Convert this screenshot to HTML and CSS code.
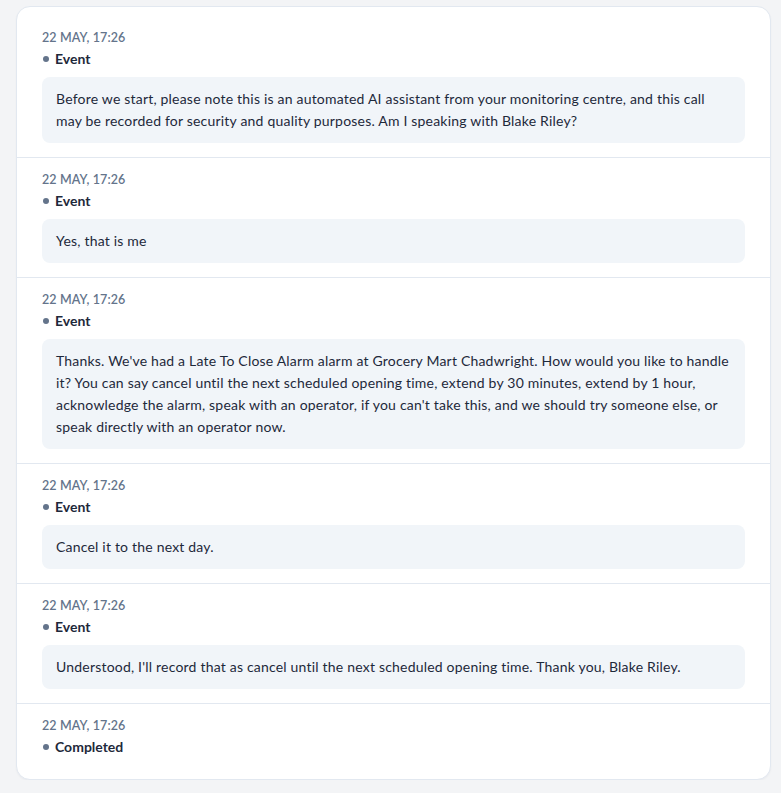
FILE: index.html
```html
<!DOCTYPE html>
<html>
<head>
<meta charset="utf-8">
<link rel="stylesheet" href="styles.css">
</head>
<body>
<div class="card">
  <div class="item">
    <div class="date">22 MAY, 17:26</div>
    <div class="label"><span class="dot"></span>Event</div>
    <div class="bubble">Before we start, please note this is an automated AI assistant from your monitoring centre, and this call may be recorded for security and quality purposes. Am I speaking with Blake Riley?</div>
  </div>
  <div class="item">
    <div class="date">22 MAY, 17:26</div>
    <div class="label"><span class="dot"></span>Event</div>
    <div class="bubble">Yes, that is me</div>
  </div>
  <div class="item">
    <div class="date">22 MAY, 17:26</div>
    <div class="label"><span class="dot"></span>Event</div>
    <div class="bubble">Thanks. We've had a Late To Close Alarm alarm at Grocery Mart Chadwright. How would you like to handle it? You can say cancel until the next scheduled opening time, extend by 30 minutes, extend by 1 hour, acknowledge the alarm, speak with an operator, if you can't take this, and we should try someone else, or speak directly with an operator now.</div>
  </div>
  <div class="item">
    <div class="date">22 MAY, 17:26</div>
    <div class="label"><span class="dot"></span>Event</div>
    <div class="bubble">Cancel it to the next day.</div>
  </div>
  <div class="item">
    <div class="date">22 MAY, 17:26</div>
    <div class="label"><span class="dot"></span>Event</div>
    <div class="bubble">Understood, I'll record that as cancel until the next scheduled opening time. Thank you, Blake Riley.</div>
  </div>
  <div class="item last">
    <div class="date">22 MAY, 17:26</div>
    <div class="label"><span class="dot"></span>Completed</div>
  </div>
</div>
</body>
</html>
```
FILE: styles.css
```css
html, body {
  margin: 0;
  background: #f3f4f6;
}
body {
  padding: 6px 10px 0 16px;
  font-family: Lato, "Liberation Sans", sans-serif;
  color: #1e293b;
}
.card {
  background: #ffffff;
  border: 1px solid #e2e8f0;
  border-radius: 14px;
  padding: 9px 0 8px;
  box-shadow: 0 1px 2px rgba(15, 23, 42, 0.04);
}
.item {
  padding: 13px 25px 14px;
  border-bottom: 1px solid #e2e8f0;
}
.item.last {
  border-bottom: none;
}
.date {
  font-size: 12.5px;
  line-height: 18px;
  font-weight: 600;
  color: #64748b;
  letter-spacing: 0.1px;
}
.label {
  display: flex;
  align-items: center;
  gap: 6px;
  margin-top: 2px;
  font-size: 14px;
  line-height: 20px;
  font-weight: 700;
  color: #1e293b;
}
.dot {
  width: 6px;
  height: 6px;
  border-radius: 50%;
  background: #64748b;
  margin-left: 1px;
}
.bubble {
  margin-top: 8px;
  background: #f1f5f9;
  border-radius: 8px;
  padding: 11px 14px;
  font-size: 14px;
  line-height: 22px;
  letter-spacing: 0.2px;
  color: #1e293b;
}
```
